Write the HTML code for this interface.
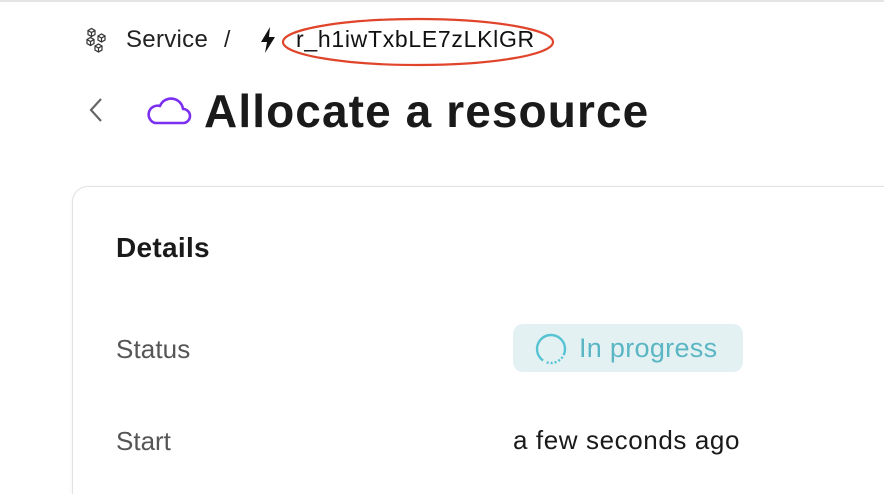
<!DOCTYPE html>
<html style="overflow:hidden"><head><style>
html,body{margin:0;width:884px;height:494px;overflow:hidden}
body{background:#fff;font-family:"Liberation Sans",sans-serif;color:#1a1a1a}
#wrap{position:relative;width:884px;height:494px;overflow:hidden}
.top{position:absolute;left:0;top:0;width:884px;height:2px;background:#e4e4e4}
.abs{position:absolute;white-space:nowrap}
.card{position:absolute;left:72px;top:186px;width:830px;height:330px;border:1px solid #e2e2e2;border-radius:16px;box-shadow:0 1px 3px rgba(0,0,0,.06)}
</style></head><body><div id="wrap">
<div class="top"></div>
<div class="card"></div>
<svg class="abs" style="left:84px;top:26px" width="28" height="28" viewBox="0 0 28 28" fill="none" stroke="#333" stroke-width="1.2">
<path d="M4 4.5l3.5-2 3.5 2v4l-3.5 2-3.5-2z M4 4.5l3.5 2 3.5-2 M7.5 6.5v4"/>
<path d="M14 10l3.5-2 3.5 2v4l-3.5 2-3.5-2z M14 10l3.5 2 3.5-2 M17.5 12v4"/>
<path d="M3 13.5l3.5-2 3.5 2v4l-3.5 2-3.5-2z M3 13.5l3.5 2 3.5-2 M6.5 15.5v4"/>
<path d="M11 20l3.5-2 3.5 2v4l-3.5 2-3.5-2z M11 20l3.5 2 3.5-2 M14.5 22v4"/>
</svg>
<div class="abs" style="left:126px;top:26px;font-size:24px;color:#222;letter-spacing:0.3px">Service</div>
<div class="abs" style="left:224px;top:26px;font-size:23px;color:#222">/</div>
<svg class="abs" style="left:259px;top:26px" width="18" height="28" viewBox="0 0 18 28"><path d="M11 1L2 16h6l-2 11 10-16h-6z" fill="#111"/></svg>
<div class="abs" style="left:296px;top:26px;font-size:23px;color:#111;letter-spacing:0.7px">r_h1iwTxbLE7zLKlGR</div>
<svg class="abs" style="left:280px;top:16px" width="276" height="52"><ellipse cx="138" cy="26" rx="135" ry="23" fill="none" stroke="#e0452b" stroke-width="2.2"/></svg>
<svg class="abs" style="left:86px;top:96px" width="20" height="30" viewBox="0 0 20 30"><path d="M15 3L5 14l10 11" fill="none" stroke="#666" stroke-width="2.2"/></svg>
<svg class="abs" style="left:143px;top:93px" width="50" height="34" viewBox="0 0 50 34"><path d="M12 30h28a7 7 0 0 0 0-14a12 12 0 0 0-23-3a8 8 0 0 0-5 17z" fill="none" stroke="#7b2ff0" stroke-width="2.6" stroke-linejoin="round"/></svg>
<div class="abs" style="left:204px;top:84px;font-size:46px;font-weight:bold;color:#1a1a1a;letter-spacing:1.1px">Allocate a resource</div>
<div class="abs" style="left:116px;top:232px;font-size:28px;font-weight:bold;color:#1a1a1a;letter-spacing:0.3px">Details</div>
<div class="abs" style="left:116px;top:334px;font-size:26px;color:#555;letter-spacing:0.1px">Status</div>
<div class="abs" style="left:513px;top:324px;width:230px;height:48px;border-radius:10px;background:#e3f1f3"></div>
<svg class="abs" style="left:534px;top:332px;transform:rotate(140deg)" width="34" height="34" viewBox="0 0 34 34"><circle cx="17" cy="17" r="14" fill="none" stroke="#55c3d3" stroke-width="2.4" stroke-dasharray="60 2 2 2 2 2 2 2 2 2 2 4"/></svg>
<div class="abs" style="left:579px;top:333px;font-size:27px;color:#5bb6c4;letter-spacing:0.3px">In progress</div>
<div class="abs" style="left:116px;top:426px;font-size:26px;color:#555">Start</div>
<div class="abs" style="left:513px;top:425px;font-size:26px;color:#1a1a1a;letter-spacing:0.6px">a few seconds ago</div>
</div></body></html>
